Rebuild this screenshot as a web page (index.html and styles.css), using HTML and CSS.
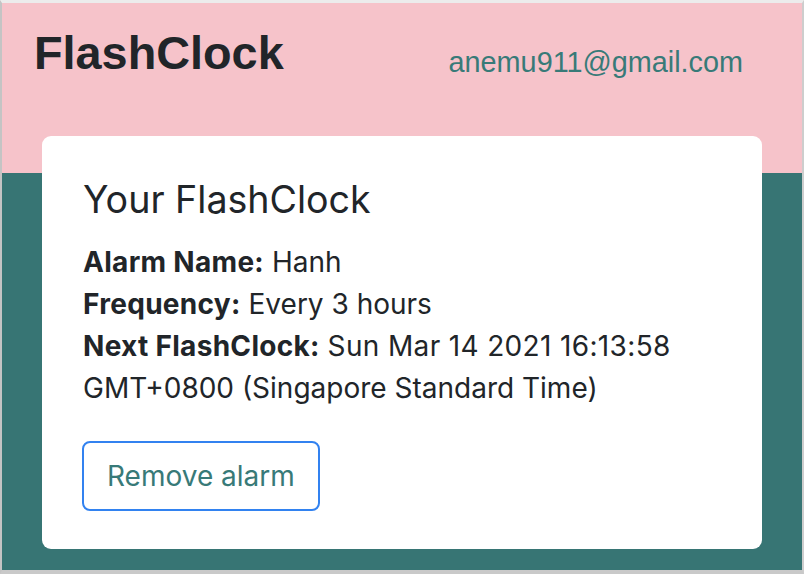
FILE: index.html
```html
<!DOCTYPE html>
<html lang="en">
<head>
<meta charset="utf-8">
<title>FlashClock</title>
<link rel="stylesheet" href="styles.css">
</head>
<body>
<div class="frame">
  <div class="popup">
    <header class="topbar">
      <h1 class="brand">FlashClock</h1>
      <span class="user-email">anemu911@gmail.com</span>
    </header>
    <section class="card">
      <h2 class="card-title">Your FlashClock</h2>
      <p class="line"><strong>Alarm Name:</strong> Hanh</p>
      <p class="line"><strong>Frequency:</strong> Every 3 hours</p>
      <p class="line"><strong>Next FlashClock:</strong> <span class="date">Sun Mar 14 2021 16:13:58</span> GMT+0800 (Singapore Standard Time)</p>
      <button class="btn-remove" type="button">Remove alarm</button>
    </section>
  </div>
</div>
</body>
</html>
```

FILE: styles.css
```css
* { box-sizing: border-box; }

html, body {
  margin: 0;
  padding: 0;
  background: #cfcfcf;
}

.frame {
  width: 804px;
  height: 574px;
  border-top: 3px solid #ececec;
  border-left: 2px solid #c4c4c4;
  border-right: 2px solid #cdcdcd;
  border-bottom: 4px solid #c9c9c9;
}

.popup {
  height: 567px;
  background: linear-gradient(#f6c3ca 0, #f6c3ca 170px, #377574 170px, #377574 100%);
  padding-top: 23px;
  overflow: hidden;
}

.topbar {
  display: flex;
  justify-content: space-between;
  align-items: flex-start;
  padding: 0 59px 0 32px;
}

.brand {
  margin: 0;
  font-family: "Liberation Sans", Arial, sans-serif;
  font-weight: 700;
  font-size: 46.8px;
  line-height: 55px;
  color: #212529;
}

.user-email {
  margin-top: 15px;
  font-family: "Liberation Sans", Arial, sans-serif;
  font-size: 28.8px;
  line-height: 42px;
  color: #387a78;
}

.card {
  margin: 53px 40px 0 40px;
  height: 413px;
  background: #ffffff;
  border-radius: 9px;
  padding: 42px 41px 39px 41px;
  font-family: Inter, "Noto Sans", sans-serif;
  color: #212529;
}

.card-title {
  margin: 0 0 20px 0;
  font-size: 37.6px;
  line-height: 43px;
  font-weight: 400;
}

.line {
  margin: 0;
  font-size: 28px;
  line-height: 42px;
}

.line strong {
  font-weight: 700;
  letter-spacing: 0.3px;
}

.date { letter-spacing: 0.35px; }

.btn-remove {
  margin: 32px 0 0 -1px;
  font-family: Inter, "Noto Sans", sans-serif;
  font-size: 28px;
  line-height: 42px;
  padding: 12px 23px;
  color: #387a78;
  background: #ffffff;
  border: 2px solid #3282f0;
  border-radius: 8px;
}
```
